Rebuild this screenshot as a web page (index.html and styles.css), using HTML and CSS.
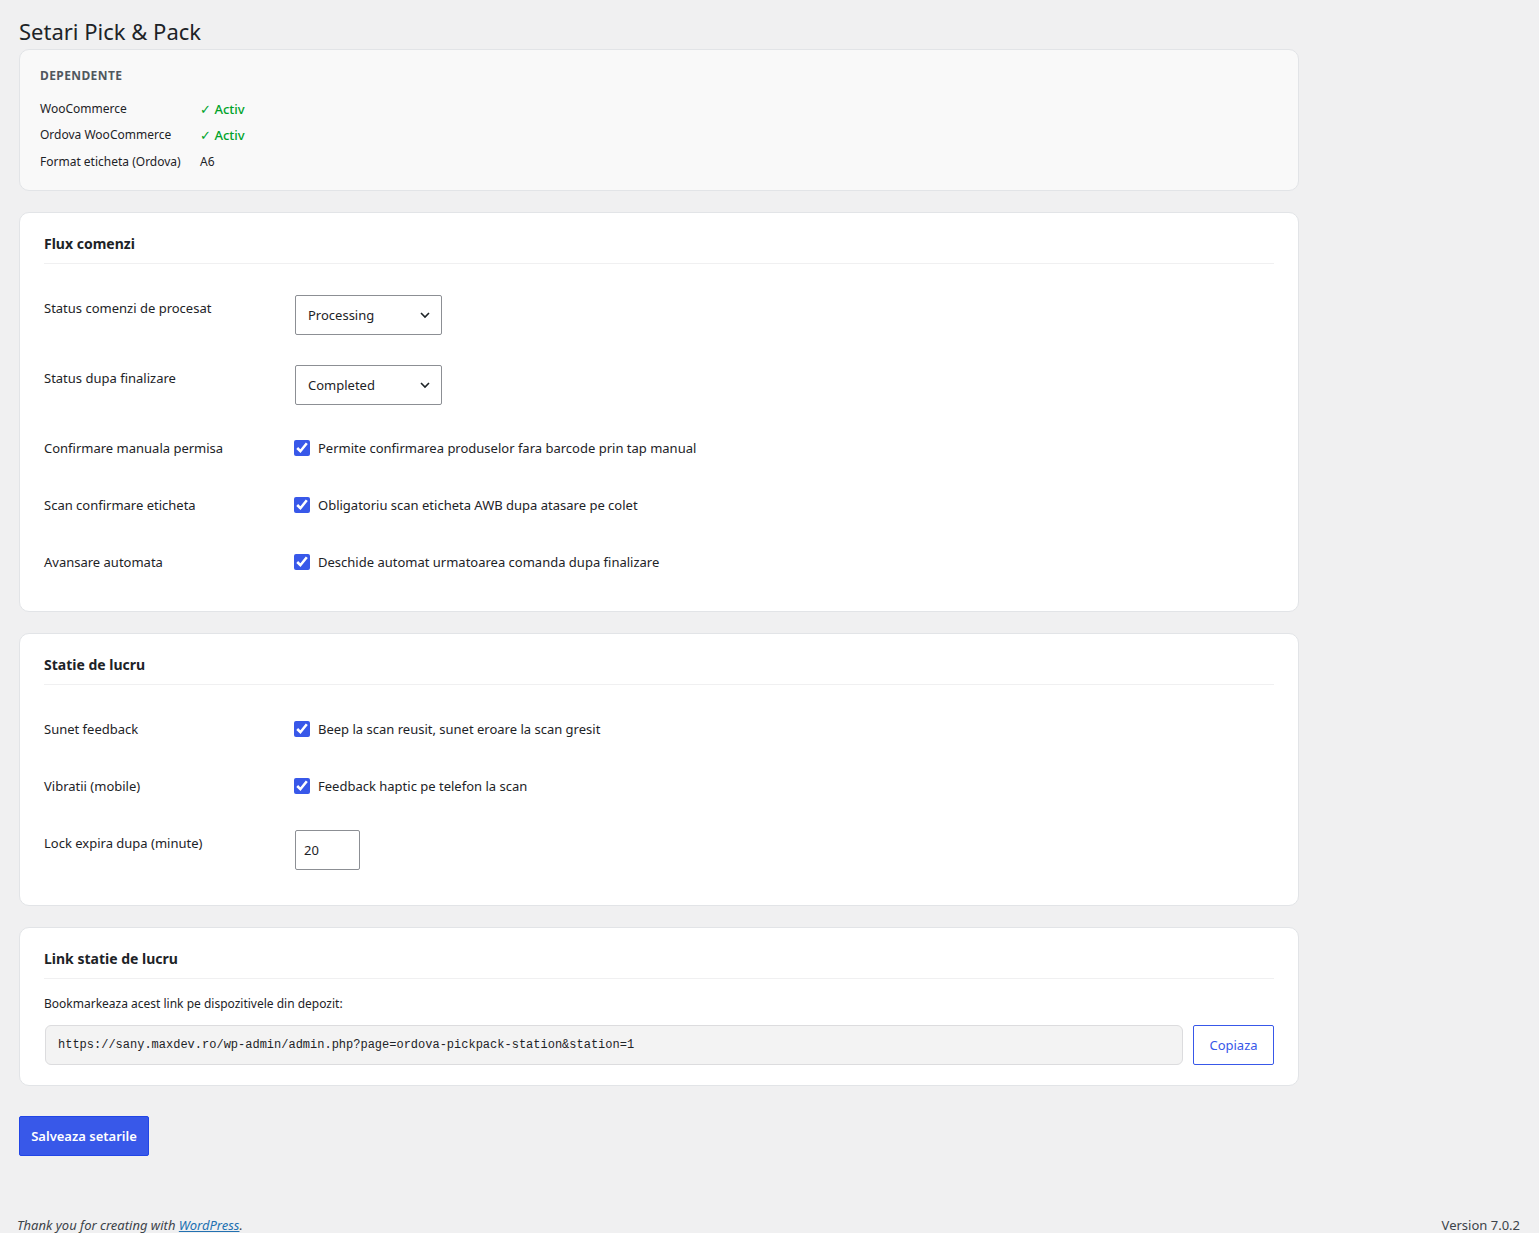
FILE: index.html
```html
<!DOCTYPE html>
<html lang="ro">

<head>
    <meta charset="UTF-8">
    <meta name="viewport" content="width=device-width, initial-scale=1.0">
    <title>Setari Pick & Pack</title>

    <link rel="stylesheet" href="styles.css">
</head>

<body>
    <div class="wrap">
        <h1>Setari Pick &amp; Pack</h1>

        <div class="card card-deps">
            <h3 class="deps-title">Dependente</h3>
            <div class="dep-row">
                <span class="dep-label">WooCommerce</span><span class="dep-ok">&#10003; Activ</span>
            </div>
            <div class="dep-row">
                <span class="dep-label">Ordova WooCommerce</span><span class="dep-ok">&#10003; Activ</span>
            </div>
            <div class="dep-row">
                <span class="dep-label">Format eticheta (Ordova)</span><span>A6</span>
            </div>
        </div>

        <form>
            <div class="card">
                <h2>Flux comenzi</h2>
                <div class="form-table">
                    <div class="row">
                        <div class="th">Status comenzi de procesat</div>
                        <div class="td">
                            <select class="select">
                                <option>Processing</option>
                                <option>On hold</option>
                            </select>
                        </div>
                    </div>
                    <div class="row">
                        <div class="th">Status dupa finalizare</div>
                        <div class="td">
                            <select class="select">
                                <option>Completed</option>
                                <option>Processing</option>
                            </select>
                        </div>
                    </div>
                    <div class="row">
                        <div class="th">Confirmare manuala permisa</div>
                        <div class="td">
                            <label class="check"><input type="checkbox" checked> Permite confirmarea produselor fara barcode prin tap manual</label>
                        </div>
                    </div>
                    <div class="row">
                        <div class="th">Scan confirmare eticheta</div>
                        <div class="td">
                            <label class="check"><input type="checkbox" checked> Obligatoriu scan eticheta AWB dupa atasare pe colet</label>
                        </div>
                    </div>
                    <div class="row">
                        <div class="th">Avansare automata</div>
                        <div class="td">
                            <label class="check"><input type="checkbox" checked> Deschide automat urmatoarea comanda dupa finalizare</label>
                        </div>
                    </div>
                </div>
            </div>

            <div class="card">
                <h2>Statie de lucru</h2>
                <div class="form-table">
                    <div class="row">
                        <div class="th">Sunet feedback</div>
                        <div class="td">
                            <label class="check"><input type="checkbox" checked> Beep la scan reusit, sunet eroare la scan gresit</label>
                        </div>
                    </div>
                    <div class="row">
                        <div class="th">Vibratii (mobile)</div>
                        <div class="td">
                            <label class="check"><input type="checkbox" checked> Feedback haptic pe telefon la scan</label>
                        </div>
                    </div>
                    <div class="row">
                        <div class="th">Lock expira dupa (minute)</div>
                        <div class="td">
                            <input class="num" type="number" value="20">
                        </div>
                    </div>
                </div>
            </div>

            <div class="card">
                <h2>Link statie de lucru</h2>
                <p class="hint">Bookmarkeaza acest link pe dispozitivele din depozit:</p>
                <div class="link-row">
                    <input class="link" type="text" readonly value="https://sany.maxdev.ro/wp-admin/admin.php?page=ordova-pickpack-station&amp;station=1">
                    <button type="button" class="btn-copy">Copiaza</button>
                </div>
            </div>

            <button type="button" class="btn-save">Salveaza setarile</button>
        </form>
    </div>

    <div class="footer">
        <span class="thanks">Thank you for creating with <a href="#">WordPress</a>.</span>
        <span>Version 7.0.2</span>
    </div>
</body>

</html>
```

FILE: styles.css
```css
* {
    box-sizing: border-box;
}

body {
    margin: 0;
    background-color: #f0f0f1;
    color: #1d2327;
    font-family: "Noto Sans", "Open Sans", sans-serif;
    font-size: 13px;
    line-height: 1.4;
}

.wrap {
    padding: 0 20px 0 19px;
    max-width: 1319px;
}

h1 {
    margin: 0;
    padding: 17px 0 3px 0;
    font-size: 22px;
    font-weight: 400;
    line-height: 1.3;
}

.card {
    background-color: #fff;
    border: 1px solid #e2e4e7;
    border-radius: 10px;
    padding: 20px 24px;
    margin-bottom: 21px;
}

.card-deps {
    background-color: #f9f9f9;
    padding: 18px 20px 15px 20px;
}

.deps-title {
    margin: 0 0 11px 0;
    font-size: 12px;
    font-weight: 700;
    text-transform: uppercase;
    letter-spacing: 0.4px;
    color: #50575e;
}

.dep-row {
    display: flex;
    align-items: center;
    height: 26.5px;
    font-size: 12px;
    line-height: 18px;
}

.dep-label {
    width: 160px;
}

.dep-ok {
    color: #00a32a;
    font-size: 13px;
    font-weight: 500;
}

h2 {
    margin: 0;
    padding-bottom: 9px;
    border-bottom: 1px solid #f0f0f1;
    font-size: 14px;
    font-weight: 700;
    line-height: 1.5;
}

.form-table {
    margin-top: 16px;
}

.row {
    display: flex;
}

.th {
    width: 251px;
    padding: 20px 10px 20px 0;
    font-weight: 400;
    line-height: 1.3;
}

.td {
    padding: 15px 0;
}

.select {
    appearance: none;
    width: 147px;
    height: 40px;
    padding: 0 30px 0 12px;
    border: 1px solid #8c8f94;
    border-radius: 2px;
    background: #fff url("data:image/svg+xml;utf8,<svg xmlns='http://www.w3.org/2000/svg' width='12' height='12' viewBox='0 0 12 12'><path d='M2 4l4 4 4-4' fill='none' stroke='%231d2327' stroke-width='1.6'/></svg>") no-repeat right 10px center;
    font-family: inherit;
    font-size: 13px;
    color: #1d2327;
}

.check {
    display: flex;
    align-items: center;
    gap: 8px;
    height: 27px;
    font-size: 13px;
}

.check input {
    margin: 0 0 0 -1px;
    width: 16px;
    height: 16px;
    accent-color: #3858e9;
}

.num {
    width: 65px;
    height: 40px;
    padding: 0 8px;
    border: 1px solid #8c8f94;
    border-radius: 2px;
    font-family: inherit;
    font-size: 13px;
    color: #1d2327;
}

.hint {
    margin: 17px 0 12px 0;
    font-size: 12px;
}

.link-row {
    display: flex;
    gap: 10px;
}

.link {
    flex: 1;
    height: 40px;
    margin-left: 1px;
    padding: 0 12px;
    border: 1px solid #dcdcde;
    border-radius: 6px;
    background-color: #f3f3f3;
    font-family: "Liberation Mono", monospace;
    font-size: 12px;
    color: #1d2327;
}

.btn-copy {
    width: 81px;
    height: 40px;
    border: 1px solid #3858e9;
    border-radius: 2px;
    background-color: #fff;
    color: #3858e9;
    font-family: inherit;
    font-size: 13px;
    cursor: pointer;
}

.btn-save {
    width: 130px;
    height: 40px;
    margin-top: 9px;
    border: 1px solid #2145e6;
    border-radius: 2px;
    background-color: #3858e9;
    color: #fff;
    font-family: inherit;
    font-size: 13px;
    font-weight: 600;
    cursor: pointer;
}

.footer {
    display: flex;
    justify-content: space-between;
    padding: 60px 19px 0 17px;
    font-size: 13px;
    color: #3c434a;
}

.thanks {
    font-style: italic;
}

.footer a {
    color: #2271b1;
}
```
